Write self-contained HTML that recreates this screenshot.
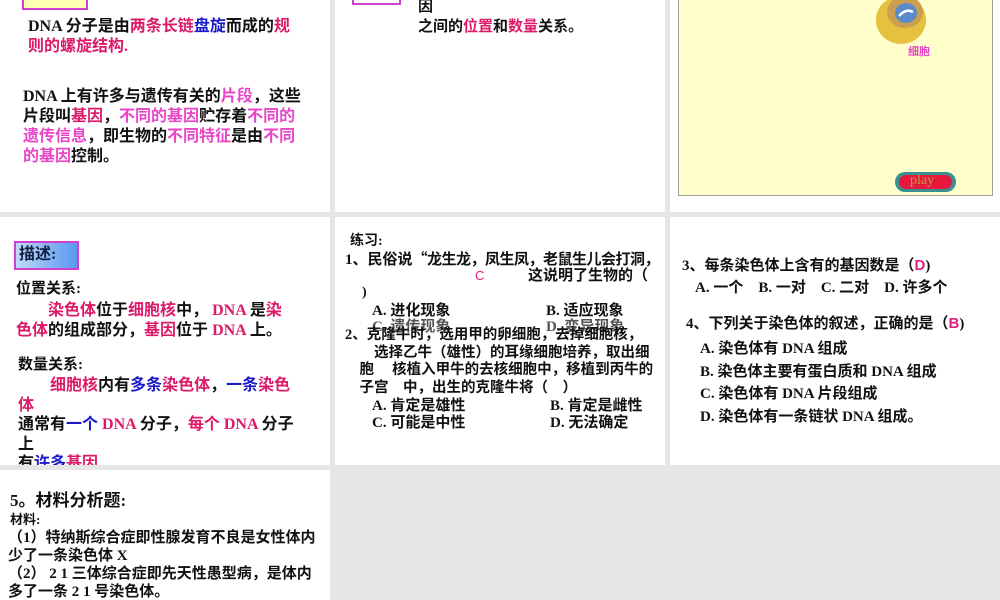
<!DOCTYPE html>
<html><head><meta charset="utf-8"><style>
body{margin:0;width:1000px;height:600px;background:#e6e6e6;position:relative;overflow:hidden;font-family:"Liberation Serif","Noto Sans CJK SC",sans-serif;font-weight:bold;color:#111}
.p{position:absolute;background:#fff;overflow:hidden}
.t{position:absolute;white-space:nowrap;line-height:1}
.r{color:#dc1a6a}.m{color:#e845c8}.b{color:#1a1ac8}
</style></head><body>
<div class="p" style="left:0;top:0;width:330px;height:212px">
 <div style="position:absolute;left:22px;top:-12px;width:62px;height:18px;background:#ffffb0;border:2px solid #d040d0"></div>
 <div class="t" style="left:28px;top:19px;font-size:16px">DNA 分子是由<span class="r">两条长链</span><span class="b">盘旋</span>而成的<span class="r">规</span></div>
 <div class="t" style="left:28px;top:39px;font-size:16px"><span class="r">则的螺旋结构</span><span class="r">.</span></div>
 <div class="t" style="left:23px;top:87px;font-size:16px;line-height:20px">DNA 上有许多与遗传有关的<span class="m">片段</span>，这些<br>片段叫<span class="r">基因</span>，<span class="m">不同的基因</span>贮存着<span class="m">不同的</span><br><span class="m">遗传信息</span>，即生物的<span class="m">不同特征</span>是由<span class="m">不同</span><br><span class="m">的基因</span>控制。</div>
</div>
<div class="p" style="left:335px;top:0;width:330px;height:212px">
 <div style="position:absolute;left:17px;top:-10px;width:45px;height:11px;border:2px solid #d040d0"></div>
 <div class="t" style="left:83px;top:0px;font-size:15px">因</div>
 <div class="t" style="left:83px;top:20px;font-size:15px">之间的<span class="r">位置</span>和<span class="r">数量</span>关系。</div>
</div>
<div class="p" style="left:670px;top:0;width:330px;height:212px">
 <div style="position:absolute;left:8px;top:-2px;width:313px;height:196px;background:#ffffcc;border:1px solid #a0a090"></div>
 <svg style="position:absolute;left:205px;top:-4px" width="54" height="52"><ellipse cx="26" cy="24" rx="25" ry="24" fill="#e8c040"/><ellipse cx="30" cy="16" rx="18" ry="16" fill="#c8a050"/><ellipse cx="31" cy="17" rx="11" ry="10" fill="#5a8ac8"/><path d="M24 20 Q31 12 38 16" stroke="#fff" stroke-width="2.5" fill="none"/></svg>
 <div class="t m" style="left:238px;top:47px;font-size:11px">细胞</div>
 <div style="position:absolute;left:225px;top:172px;width:61px;height:20px;border-radius:10px;background:#3a9090"></div>
 <div style="position:absolute;left:229px;top:175px;width:53px;height:14px;border-radius:7px;background:#e8183c"></div>
 <div class="t" style="left:240px;top:174px;font-size:14px;font-weight:normal;color:#b0a040;font-family:'Liberation Serif',serif">play</div>
</div>
<div class="p" style="left:0;top:217px;width:330px;height:248px">
 <div style="position:absolute;left:14px;top:24px;width:61px;height:25px;border:2px solid #d040d0;background:linear-gradient(90deg,#c0d8f8,#5898f0)"></div>
 <div class="t" style="left:19px;top:30px;font-size:16px;color:#102040">描述:</div>
 <div class="t" style="left:16px;top:65px;font-size:15px">位置关系:</div>
 <div class="t" style="left:16px;top:84px;font-size:16px;line-height:20px">　　<span class="r">染色体</span>位于<span class="r">细胞核</span>中， <span class="r">DNA</span> 是<span class="r">染</span><br><span class="r">色体</span>的组成部分，<span class="r">基因</span>位于 <span class="r">DNA</span> 上。</div>
 <div class="t" style="left:18px;top:141px;font-size:15px">数量关系:</div>
 <div class="t" style="left:18px;top:159px;font-size:16px;line-height:19.5px">　　<span class="r">细胞核</span>内有<span class="b">多条</span><span class="r">染色体</span>，<span class="b">一条</span><span class="r">染色</span><br><span class="r">体</span><br>通常有<span class="b">一个</span> <span class="r">DNA</span> 分子，<span class="r">每个 DNA</span> 分子<br>上<br>有<span class="b">许多</span><span class="r">基因</span></div>
</div>
<div class="p" style="left:335px;top:217px;width:330px;height:248px">
 <div class="t" style="left:15px;top:18px;font-size:14px">练习:</div>
 <div class="t" style="left:10px;top:34px;font-size:15px">1、民俗说<span style="font-family:'Noto Sans CJK SC',sans-serif;letter-spacing:-0.5px">“龙生龙，凤生凤，老鼠生儿会打洞，</span></div>
 <div class="t" style="left:140px;top:52px;font-size:13px;color:#e02080;font-family:'Liberation Sans',sans-serif;font-weight:normal">C</div>
 <div class="t" style="left:193px;top:52px;font-size:15px">这说明了生物的（</div>
 <div class="t" style="left:27px;top:69px;font-size:14px">)</div>
 <div class="t" style="left:37px;top:87px;font-size:15px">A. 进化现象</div>
 <div class="t" style="left:211px;top:87px;font-size:15px">B. 适应现象</div>
 <div class="t" style="left:37px;top:103px;font-size:15px;color:#555">C. 遗传现象</div>
 <div class="t" style="left:211px;top:103px;font-size:15px;color:#555">D. 变异现象</div>
 <div class="t" style="left:10px;top:110px;font-size:14.5px;line-height:17.5px">2、克隆牛时，选用甲的卵细胞，去掉细胞核，<br>　　选择乙牛（雄性）的耳缘细胞培养，取出细<br>　胞　 核植入甲牛的去核细胞中，移植到丙牛的<br>　子宫　中，出生的克隆牛将（　）</div>
 <div class="t" style="left:37px;top:182px;font-size:15px">A. 肯定是雄性</div>
 <div class="t" style="left:215px;top:182px;font-size:15px">B. 肯定是雌性</div>
 <div class="t" style="left:37px;top:199px;font-size:15px">C. 可能是中性</div>
 <div class="t" style="left:215px;top:199px;font-size:15px">D. 无法确定</div>
</div>
<div class="p" style="left:670px;top:217px;width:330px;height:248px">
 <div class="t" style="left:12px;top:41px;font-size:15px">3、每条染色体上含有的基因数是（<span style="color:#e02080;font-family:'Liberation Sans',sans-serif">D</span>)</div>
 <div class="t" style="left:25px;top:64px;font-size:15px">A. 一个　B. 一对　C. 二对　D. 许多个</div>
 <div class="t" style="left:16px;top:99px;font-size:15px">4、下列关于染色体的叙述，正确的是（<span style="color:#e02080;font-family:'Liberation Sans',sans-serif">B</span>)</div>
 <div class="t" style="left:30px;top:121px;font-size:15px;line-height:22.7px">A. 染色体有 DNA 组成<br>B. 染色体主要有蛋白质和 DNA 组成<br>C. 染色体有 DNA 片段组成<br>D. 染色体有一条链状 DNA 组成。</div>
</div>
<div class="p" style="left:0;top:470px;width:330px;height:130px">
 <div class="t" style="left:10px;top:22px;font-size:17px">5。材料分析题:</div>
 <div class="t" style="left:10px;top:43px;font-size:13px">材料:</div>
 <div class="t" style="left:8px;top:59px;font-size:15px;line-height:18px">（1）特纳斯综合症即性腺发育不良是女性体内<br>少了一条染色体 X<br>（2） 2 1 三体综合症即先天性愚型病，是体内<br>多了一条 2 1 号染色体。</div>
</div>
</body></html>
